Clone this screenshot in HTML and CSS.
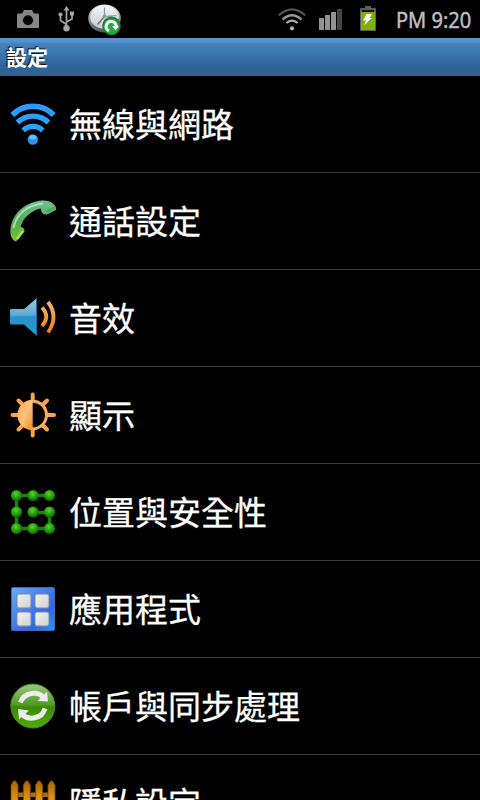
FILE: index.html
```html
<!DOCTYPE html>
<html lang="zh-Hant">
<head>
    <meta charset="UTF-8">
    <title>設定</title>
    <link rel="stylesheet" href="styles.css">
</head>
<body>
    <div id="status">
        <svg class="camera" width="22" height="19" viewBox="0 0 22 19">
            <path d="M1 3.500h4L7 0h8l2 3.500h4q1 0 1 1v12.500q0 1-1 1H1q-1 0-1-1V4.500q0-1 1-1z" fill="#868686"/>
            <circle cx="11" cy="10.3" r="5" fill="#000"/>
        </svg>
        <svg class="usb" width="17" height="26" viewBox="0 0 17 26">
            <path d="M8.5 3v18M8.5 18.500l-6-4V8.500M8.500 16l5.500-3V8" fill="none" stroke="#a4a4a4" stroke-width="1.7"/>
            <path d="M8.500 0l3 4.500h-6z" fill="#a4a4a4"/>
            <circle cx="8.500" cy="22.300" r="3.200" fill="#a4a4a4"/>
            <circle cx="2.500" cy="8.500" r="2.100" fill="#a4a4a4"/>
            <path d="M12 5.500h4v4h-4z" fill="#a4a4a4"/>
        </svg>
        <svg class="clock" width="34" height="32" viewBox="0 0 34 32">
            <defs>
                <linearGradient id="face" x1="0" y1="0" x2="0" y2="1">
                    <stop offset="0" stop-color="#f4f8fa"/><stop offset="1" stop-color="#b9ccd8"/>
                </linearGradient>
                <linearGradient id="rim" x1="0" y1="0" x2="0" y2="1">
                    <stop offset="0" stop-color="#d9d9d9"/><stop offset="1" stop-color="#5c5252"/>
                </linearGradient>
            </defs>
            <ellipse cx="16.500" cy="14.500" rx="16.300" ry="14" fill="url(#rim)"/>
            <ellipse cx="16.500" cy="13" rx="14.300" ry="11.800" fill="url(#face)"/>
            <path d="M16.500 3.500v9l12-1" fill="none" stroke="#8d969c" stroke-width="1.200"/>
            <path d="M16 13l-6.500 7.500" stroke="#c8414a" stroke-width="1.200"/>
            <circle cx="16.500" cy="12.200" r="1.800" fill="#8d969c"/>
            <circle cx="23.500" cy="21.800" r="9.300" fill="#12832a"/>
            <circle cx="23.500" cy="22.300" r="7.800" fill="#27a83c"/>
            <path d="M21 26.800a4.900 4.900 0 1 1 7-4.500" fill="none" stroke="#fff" stroke-width="3"/>
            <path d="M24 22h7l-3.500 4.300z" fill="#fff"/>
        </svg>
        <svg class="wlan" width="28" height="23" viewBox="0 0 28 23">
            <g fill="none" stroke-width="2.200">
                <path d="M.8 7.300Q14-4.500 27.200 7.300" stroke="#555"/>
                <path d="M4.500 11.500Q14 3 23.500 11.500" stroke="#999"/>
                <path d="M8.300 15Q14 10.200 19.700 15" stroke="#b0b0b0"/>
            </g>
            <circle cx="14" cy="20.300" r="2.100" fill="#b8b8b8"/>
        </svg>
        <svg class="signal" width="24" height="22" viewBox="0 0 24 22">
            <path d="M0 10h5v12H0zM6 7h5v15H6zM12 4h5v18h-5z" fill="#929292"/>
            <path d="M18 1h5v21h-5z" fill="#454545"/>
        </svg>
        <svg class="battery" width="16" height="25" viewBox="0 0 16 25">
            <path d="M5 0h6v2h4q1 0 1 1v21q0 1-1 1H1q-1 0-1-1V3q0-1 1-1h4z" fill="#5e5e5e"/>
            <path d="M2 4h12v2H2z" fill="#151515"/>
            <path d="M1 6h14v18H1z" fill="#7db004"/>
            <path d="M6.500 8H12l-2.500 4h2.200L4 19.500l2-5H3z" fill="#fff"/>
        </svg>
        <span class="time">PM 9:20</span>
    </div>
    <h1>設定</h1>
    <ul id="menu">
        <li>
            <svg viewBox="0 0 48 48">
                <defs>
                    <linearGradient id="wifi" gradientUnits="userSpaceOnUse" x1="0" y1="3" x2="0" y2="45">
                        <stop offset="0" stop-color="#2a98fa"/><stop offset=".6" stop-color="#2ca2ff"/><stop offset="1" stop-color="#1579e0"/>
                    </linearGradient>
                </defs>
                <g fill="none" stroke="url(#wifi)" stroke-width="5.400">
                    <path d="M3.300 15A29 29 0 0 1 44.700 15"/>
                    <path d="M8.500 22.500A22 22 0 0 1 39.500 22.500"/>
                    <path d="M14.300 30.500A13.500 13.500 0 0 1 33.700 30.500"/>
                </g>
                <circle cx="23.800" cy="39.500" r="5.200" fill="#2793f3"/>
                <ellipse cx="23.800" cy="37.300" rx="3.600" ry="2.300" fill="#6db9fa"/>
            </svg>
            <span>無線與網路</span>
        </li>
        <li>
            <svg viewBox="0 0 48 48">
                <defs>
                    <linearGradient id="phone" x1="0" y1="0" x2="0" y2="1">
                        <stop offset="0" stop-color="#74c28d"/><stop offset=".55" stop-color="#52a953"/><stop offset="1" stop-color="#79c52f"/>
                    </linearGradient>
                </defs>
                <path d="M7 44.500C2 43 .3 36 2 28.500C5.500 14 18 5 33 3.500C40 3 46 6.500 47 11V13L38 17.500Q32 18 31.800 11.500C23 13 13.500 21 11.800 30Q16 30.500 15.500 34.500Z" fill="url(#phone)"/>
                <path d="M4.500 31C7.500 16 19 8 34 6.500" fill="none" stroke="#c5ead0" stroke-width="2" opacity=".75"/>
                <path d="M37.500 14.500L46 11" stroke="#3eaf63" stroke-width="3"/>
                <path d="M14 34L8 42" stroke="#a5dd46" stroke-width="2.500"/>
            </svg>
            <span>通話設定</span>
        </li>
        <li>
            <svg viewBox="0 0 48 48">
                <defs>
                    <linearGradient id="speaker" x1="0" y1="0" x2="0" y2="1">
                        <stop offset="0" stop-color="#a3cbe3"/><stop offset=".45" stop-color="#5aa9d3"/><stop offset=".5" stop-color="#2792c7"/><stop offset="1" stop-color="#249bd3"/>
                    </linearGradient>
                    <linearGradient id="waves" gradientUnits="userSpaceOnUse" x1="0" y1="6" x2="0" y2="40">
                        <stop offset="0" stop-color="#f7b57f"/><stop offset="1" stop-color="#f6790b"/>
                    </linearGradient>
                </defs>
                <path d="M1 16.500Q1 15 2.500 15H15L28 4v38L15 30.500H2.500Q1 30.500 1 29z" fill="url(#speaker)"/>
                <path d="M27.500 4.500v37" stroke="#196e9d"/>
                <g fill="none" stroke="url(#waves)" stroke-width="3.800">
                    <path d="M33 13.500Q41.500 22.500 33 32"/>
                    <path d="M39 8Q50 22.500 39 38.500"/>
                </g>
            </svg>
            <span>音效</span>
        </li>
        <li>
            <svg viewBox="0 0 48 48">
                <defs>
                    <linearGradient id="sun" x1="0" y1="0" x2="1" y2="1">
                        <stop offset="0" stop-color="#fdaa55"/><stop offset=".5" stop-color="#ffc27b"/><stop offset="1" stop-color="#f78e20"/>
                    </linearGradient>
                </defs>
                <path d="M23.700 3.500v7M23.700 37v7.500M3.500 24H10M37.500 24H45M9.500 9.500l5 5M38 9.500l-5 5M9.500 38.500l5-5M38 38.500l-5-5" stroke="#fba24b" stroke-width="4" stroke-linecap="round"/>
                <circle cx="23.700" cy="24" r="13.800" fill="#000" stroke="#fdae5d" stroke-width="3"/>
                <path d="M23.700 9.500a14.500 14.500 0 0 0 0 29z" fill="url(#sun)"/>
            </svg>
            <span>顯示</span>
        </li>
        <li>
            <svg viewBox="0 0 48 48">
                <defs>
                    <radialGradient id="dot" cx=".45" cy=".35" r=".65">
                        <stop offset="0" stop-color="#58d72f"/><stop offset=".5" stop-color="#28a311"/><stop offset="1" stop-color="#116305"/>
                    </radialGradient>
                </defs>
                <path d="M40.500 7.500H7.500v33h33v-16h-17" fill="none" stroke="#237d10" stroke-width="3.500"/>
                <g fill="url(#dot)">
                    <circle cx="7.500" cy="7.500" r="5.600"/>
                    <circle cx="24" cy="7.500" r="5.600"/>
                    <circle cx="40.500" cy="7.500" r="5.600"/>
                    <circle cx="7.500" cy="24" r="5.600"/>
                    <circle cx="24" cy="24" r="5.600"/>
                    <circle cx="40.500" cy="24" r="5.600"/>
                    <circle cx="7.500" cy="40.500" r="5.600"/>
                    <circle cx="24" cy="40.500" r="5.600"/>
                    <circle cx="40.500" cy="40.500" r="5.600"/>
                </g>
            </svg>
            <span>位置與安全性</span>
        </li>
        <li>
            <svg viewBox="0 0 48 48">
                <defs>
                    <linearGradient id="app" x1="0" y1="0" x2="1" y2="1">
                        <stop offset="0" stop-color="#6caaf5"/><stop offset=".4" stop-color="#4c81ee"/><stop offset=".7" stop-color="#3266dd"/><stop offset="1" stop-color="#2a96ea"/>
                    </linearGradient>
                    <linearGradient id="tile" x1="0" y1="0" x2="1" y2="1">
                        <stop offset="0" stop-color="#f4f4f4"/><stop offset="1" stop-color="#cfcfcf"/>
                    </linearGradient>
                </defs>
                <rect x="2.500" y="2.500" width="43" height="43" rx="1.500" fill="url(#app)" stroke="#3569c8"/>
                <g fill="url(#tile)" stroke="#788cae">
                    <rect x="8" y="9" width="14" height="14" rx="2"/>
                    <rect x="26" y="9" width="14" height="14" rx="2"/>
                    <rect x="8" y="27" width="14" height="14" rx="2"/>
                    <rect x="26" y="27" width="14" height="14" rx="2"/>
                </g>
            </svg>
            <span>應用程式</span>
        </li>
        <li>
            <svg viewBox="0 0 48 48">
                <defs>
                    <linearGradient id="sync" x1="0" y1="0" x2="0" y2="1">
                        <stop offset="0" stop-color="#9bc680"/><stop offset=".48" stop-color="#4f9a20"/><stop offset=".52" stop-color="#388a04"/><stop offset="1" stop-color="#52ac0b"/>
                    </linearGradient>
                </defs>
                <circle cx="23.800" cy="24" r="22" fill="url(#sync)" stroke="#4b8b25"/>
                <g fill="none" stroke="#ececec" stroke-width="5">
                    <path d="M11.500 20.500C15 10 29 8.500 34.500 15.500"/>
                    <path d="M36 26.500C33 37 19 39 13 32"/>
                </g>
                <path d="M38 9.500l1 10-10.500-.5zM9 27l11 1.500-10 9z" fill="#ececec"/>
            </svg>
            <span>帳戶與同步處理</span>
        </li>
        <li>
            <svg viewBox="0 0 48 48">
                <defs>
                    <linearGradient id="fence" x1="0" y1="0" x2="0" y2="1">
                        <stop offset="0" stop-color="#a86305"/><stop offset=".4" stop-color="#df9511"/><stop offset="1" stop-color="#b06f08"/>
                    </linearGradient>
                </defs>
                <path d="M2 13.500h44V18H2zM2 34h44v4H2z" fill="#a96c12"/>
                <path d="M2 46V6l2.500-4h2L9 6v40zM14.300 46V6l2.500-4h2l2.500 4v40zM26.600 46V6l2.500-4h2l2.500 4v40zM39 46V6l2.500-4h2L46 6v40z" fill="url(#fence)" stroke="#7c4805" stroke-width=".8"/>
            </svg>
            <span>隱私設定</span>
        </li>
    </ul>
</body>
</html>
```
FILE: styles.css
```css
*{
    margin: 0;
    padding: 0;
}
body{
    height: 800px;
    overflow: hidden;
    color: #fff;
    background: #000;
    font-family: "Noto Sans CJK TC", sans-serif;
}
#status{
    display: flex;
    align-items: center;
    height: 38px;
}
#status svg{
    flex: none;
}
.camera{
    margin-left: 17px;
}
.usb{
    margin-left: 19px;
}
.clock{
    margin: 2px 0 0 13px;
}
.wlan{
    margin-left: 156px;
}
.signal{
    margin-left: 13px;
}
.battery{
    margin: 0 0 1px 17px;
}
.time{
    margin-left: 20px;
    color: #bebebe;
    font: 22px/38px "Noto Sans", sans-serif;
    -webkit-text-stroke: .5px #bebebe;
    white-space: nowrap;
    transform: scaleX(.91);
    transform-origin: left;
}
h1{
    height: 38px;
    padding-left: 6px;
    font-size: 21px;
    font-weight: bold;
    line-height: 36px;
    text-shadow: -1px -1px 1px #111;
    background: linear-gradient(#5a95d0, #5290ce 4px, #4381bd 6px, #3973ad 18px, #2e6497 28px, #306292);
}
#menu{
    list-style: none;
}
#menu li{
    display: flex;
    align-items: center;
    height: 96px;
    padding-left: 9px;
    border-bottom: 1px solid #3c3c3c;
}
#menu li:last-child{
    height: 45px;
    align-items: flex-start;
    padding-top: 24px;
    box-sizing: border-box;
    border-bottom: 0;
}
#menu svg{
    flex: none;
    width: 48px;
    height: 48px;
}
#menu span{
    margin: -3px 0 0 12px;
    font-size: 33px;
    line-height: 48px;
    white-space: nowrap;
    -webkit-text-stroke: .3px #fff;
}
#menu li:last-child span{
    margin-top: -1px;
}
```
